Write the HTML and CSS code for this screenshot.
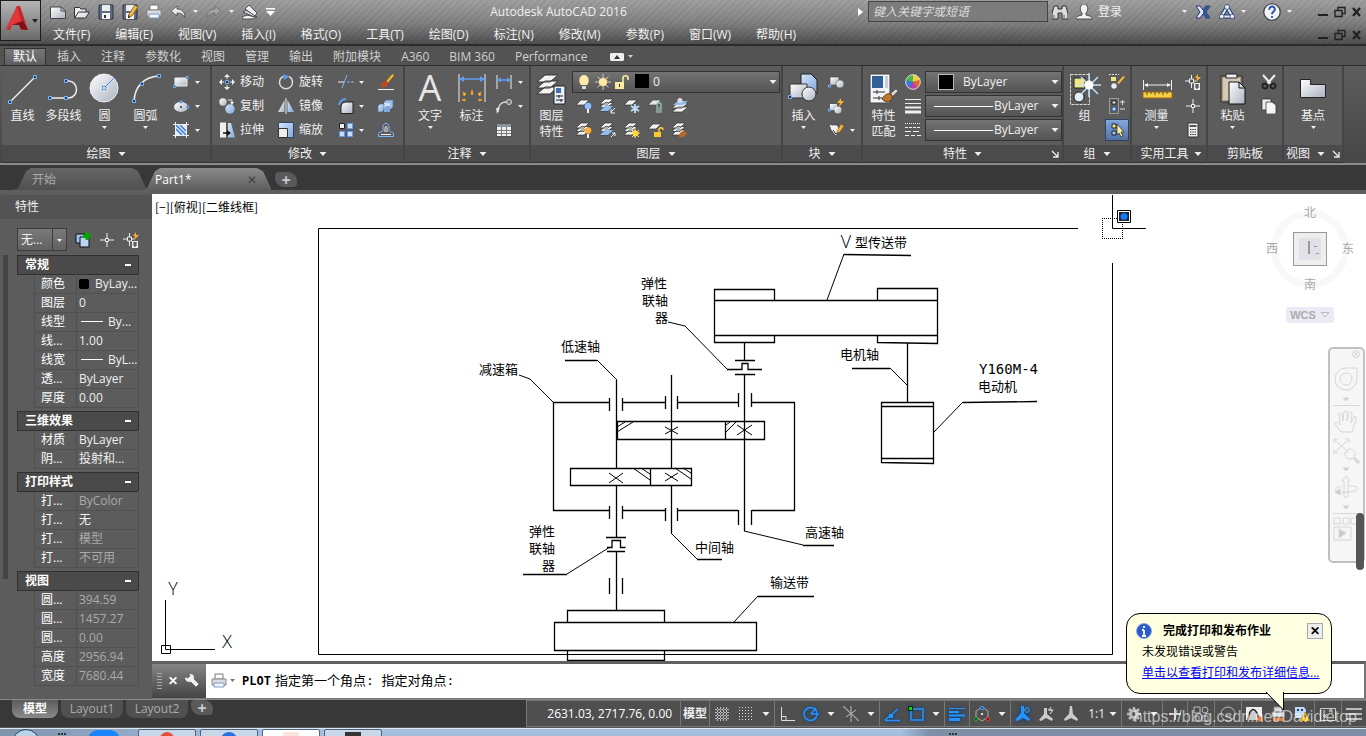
FILE: index.html
```html
<!DOCTYPE html>
<html lang="zh-CN">
<head>
    <meta charset="UTF-8">
    <meta name="viewport" content="width=device-width, initial-scale=1.0">
    <title>Autodesk AutoCAD 2016</title>
    <link rel="stylesheet" href="styles.css">
</head>
<body>
    <!-- Ícones -->
    <svg class="sprite" aria-hidden="true">
        <defs>
            <linearGradient id="g-steel" x1="0" y1="0" x2="1" y2="1"><stop offset="0" stop-color="#fff"/><stop offset="1" stop-color="#aab2c0"/></linearGradient>
            <linearGradient id="g-blue" x1="0" y1="0" x2="1" y2="1"><stop offset="0" stop-color="#d6e6fa"/><stop offset="1" stop-color="#7fa8dc"/></linearGradient>
        </defs>
        <symbol id="down" viewBox="0 0 7 4"><path d="M0 0h7L3.5 4z" fill="currentColor"/></symbol>

        <symbol id="new" viewBox="0 0 16 16"><path d="M.5 3h10.500l4.500 4v7.500H.5z" fill="url(#g-steel)" stroke="#444"/><path d="M11 3v4h4.500" fill="none" stroke="#444"/></symbol>
        <symbol id="open" viewBox="0 0 16 16"><path d="M.5 14V3.500h5L7 5h5v3" fill="#eee" stroke="#333"/><path d="M.5 14l4-6h11l-4 6z" fill="#dfe6ee" stroke="#333"/></symbol>
        <symbol id="save" viewBox="0 0 16 16"><path d="M1 1h14v14H1z" fill="#5e6b80" stroke="#2b3341"/><path d="M4 1h8v6H4z" fill="#e8ebf0"/><path d="M4 9h8v6H4z" fill="#f4f4f4"/><path d="M6 11h2v3H6z" fill="#333"/></symbol>
        <symbol id="saveas" viewBox="0 0 16 16"><use href="#save"/><path d="M7 10l6-9 3 2-6 9-3 1z" fill="#f5b83d" stroke="#6b4310" stroke-width=".7"/></symbol>
        <symbol id="print" viewBox="0 0 16 16"><path d="M4 1h8v5H4z" fill="#fff" stroke="#777"/><path d="M1 6h14v6H1z" fill="#d9dde3" stroke="#888"/><path d="M3 10h10v4H3z" fill="#eef5fc" stroke="#7d9cbf"/></symbol>
        <symbol id="undo" viewBox="0 0 16 16"><path d="M1 7l6-5v3c5 0 8 3 8 9-2-4-4-5-8-5v3z" fill="#e8e8e8" stroke="#4a4a4a" stroke-width=".8"/></symbol>
        <symbol id="redo" viewBox="0 0 16 16"><path d="M15 7L9 2v3c-5 0-8 3-8 9 2-4 4-5 8-5v3z" fill="#a5a5a5" stroke="#6d6d6d" stroke-width=".8"/></symbol>
        <symbol id="plane" viewBox="0 0 16 16"><path d="M0 13c4-2 7-2 9-1l6 1-5 2H1z" fill="#eee" stroke="#333" stroke-width=".8"/><path d="M1 8l3-2 9 5-1 2z" fill="#ccd4e0" stroke="#333" stroke-width=".8"/><path d="M3 5l4-4 8 8-2 3z" fill="#eee" stroke="#333" stroke-width=".8"/></symbol>
        <symbol id="qatmore" viewBox="0 0 9 9"><path d="M0 1h9v1.500H0zM0 4h9L4.500 9z" fill="#fff"/></symbol>
        <symbol id="binoc" viewBox="0 0 16 16"><path d="M2 2h4v3h4V2h4l2 8v5h-6V9H6v6H0v-5z" fill="#ddd" stroke="#333"/><path d="M2 11v3M12 11v3" stroke="#555"/></symbol>
        <symbol id="user" viewBox="0 0 16 16"><path d="M0 15c0-3 3-3 6-4V9C3 6 4 0 8 0s5 6 2 9v2c3 1 6 1 6 4z" fill="#f2f2f2" stroke="#333" stroke-width=".8"/></symbol>
        <symbol id="exch" viewBox="0 0 16 16"><path d="M1 2h4l3 4 3-4h4l-4 6 4 6h-4l-3-4-3 4H1l4-6z" fill="#dfe8f8" stroke="#22386f"/><path d="M8 6l3-4h4l-4 6 4 6h-4L8 10z" fill="#35549c"/></symbol>
        <symbol id="tri" viewBox="0 0 16 16"><path d="M8 3l5.500 9.500h-11z" fill="none" stroke="#223a6e" stroke-width="4"/><path d="M8 3l5.500 9.500h-11z" fill="none" stroke="#e6ecf8" stroke-width="2"/><g fill="#e6ecf8" stroke="#223a6e" stroke-width=".7"><circle cx="8" cy="3" r="2.500"/><circle cx="2.700" cy="12.500" r="2.300"/><circle cx="13.300" cy="12.500" r="2.300"/></g></symbol>
        <symbol id="help" viewBox="0 0 16 16"><circle cx="8" cy="8" r="7.300" fill="#f2f4f8" stroke="#333"/><path d="M5.500 6c0-4 5.500-3.500 5 0-.3 1.500-2.500 2-2.500 4M8 11.500v1.500" fill="none" stroke="#2a56a8" stroke-width="1.800"/></symbol>
        <symbol id="wmin" viewBox="0 0 12 12"><path d="M1 8h10v2H1z" fill="#222"/></symbol>
        <symbol id="wres" viewBox="0 0 12 12"><path d="M4 4V1.500h7v6H8M1 4.500h7v6H1z" fill="none" stroke="#222" stroke-width="1.400"/></symbol>
        <symbol id="wclose" viewBox="0 0 12 12"><path d="M2 2l7 8M9 2l-7 8" stroke="#222" stroke-width="2.400"/></symbol>

        <symbol id="line" viewBox="0 0 32 32"><path d="M4 28L28 4" stroke="#eee" stroke-width="1.500"/><path d="M1.500 27.500h3v3h-3zM26.500 2.500h3v3h-3z" fill="#2b3d5c" stroke="#7db2ff"/></symbol>
        <symbol id="pline" viewBox="0 0 32 32"><path d="M2 25h19c10-1 10-16 0-17h-3" fill="none" stroke="#eee" stroke-width="1.500"/><path d="M.5 23.500h3v3h-3zM16.500 23.500h3v3h-3zM16.500 6.500h3v3h-3z" fill="#2b3d5c" stroke="#7db2ff"/></symbol>
        <symbol id="circle" viewBox="0 0 32 32"><circle cx="15" cy="15" r="14" fill="url(#g-steel)" stroke="#eee"/><path d="M15 15L25 5" stroke="#4f8fee"/><path d="M13.500 13.500h3v3h-3z" fill="#fff" stroke="#4f8fee"/></symbol>
        <symbol id="arc" viewBox="0 0 32 32"><path d="M4 28C5 14 13 4 29 3" fill="none" stroke="#eee" stroke-width="1.500"/><path d="M2.500 26.500h3v3h-3zM10.500 9.500h3v3h-3zM27.500 1.500h3v3h-3z" fill="#2b3d5c" stroke="#7db2ff"/></symbol>
        <symbol id="rect" viewBox="0 0 16 16"><path d="M2 4h12v8H2z" fill="url(#g-steel)" stroke="#eee"/><path d="M.5 11.500h2v2h-2zM13 2.500h2v2h-2z" fill="#234" stroke="#7db2ff"/></symbol>
        <symbol id="ellipse" viewBox="0 0 16 16"><ellipse cx="8" cy="9" rx="7" ry="5" fill="url(#g-steel)"/><path d="M8 8v2M7 9h2" stroke="#333"/><path d="M7 3h2v2H7zM13.500 8h2v2h-2z" fill="#234" stroke="#7db2ff"/></symbol>
        <symbol id="hatch" viewBox="0 0 16 16"><path d="M3 3h10v10H3z" fill="#dfeafc"/><path d="M3 7l6 6M3 3l10 10M7 3l6 6" stroke="#3e7bdc" stroke-width="1.500"/><path d="M2.500 0v16M13.500 0v16M0 2.500h16M0 13.500h16" stroke="#eee"/></symbol>

        <symbol id="move" viewBox="0 0 16 16"><path d="M8 0l3 3H5zM8 16l3-3H5zM0 8l3-3v6zM16 8l-3-3v6z" fill="#eee"/><path d="M8 3v2M8 11v2M3 8h2M11 8h2" stroke="#eee"/><path d="M6.500 6.500h3v3h-3z" fill="#234" stroke="#7db2ff"/></symbol>
        <symbol id="rotate" viewBox="0 0 16 16"><path d="M11 2.500A6.500 6.500 0 1 1 5 2.500" fill="none" stroke="#ddd" stroke-width="1.500"/><path d="M5 0l6 2.500L6 6z" fill="#5f9cf5"/></symbol>
        <symbol id="trim" viewBox="0 0 16 16"><path d="M9 8h7" stroke="#7db2ff" stroke-dasharray="3 1"/><path d="M4 14L9 1" stroke="#7db2ff"/><path d="M0 8h6" stroke="#eee"/></symbol>
        <symbol id="erase" viewBox="0 0 16 16"><path d="M8 7l6-7h2v2l-6 7z" fill="#f0b63c" stroke="#7b4a12" stroke-width=".6"/><path d="M3 13c0-3 2-6 5-6l2 2c0 3-3 5-7 4z" fill="#c4471c"/><path d="M0 15.500h16" stroke="#eee"/></symbol>
        <symbol id="copy" viewBox="0 0 16 16"><circle cx="4" cy="4" r="3.700" fill="url(#g-steel)"/><circle cx="11" cy="11" r="4.700" fill="url(#g-blue)"/><path d="M9 2h4v3" fill="none" stroke="#eee"/><path d="M11 4h4l-2 3z" fill="#eee"/></symbol>
        <symbol id="mirror" viewBox="0 0 16 16"><path d="M6.500 2v12H0z" fill="url(#g-steel)"/><path d="M9.500 2v12H16z" fill="url(#g-blue)"/><path d="M8 0v16" stroke="#eee"/></symbol>
        <symbol id="fillet" viewBox="0 0 16 16"><path d="M3 15.500V9c0-3 2-5 5-5h7v11.500z" fill="url(#g-steel)" stroke="#222"/><path d="M1 7C2 3 4 1 8 1" fill="none" stroke="#5f9cf5" stroke-width="1.800"/></symbol>
        <symbol id="explode" viewBox="0 0 16 16"><path d="M6 4l2-2h7v7l-2 2H6z" fill="#9dbfe8" stroke="#4d6a90" stroke-width=".6"/><path d="M6 5h6v7H6z" fill="#cfe1f6"/><path d="M0 8l2-2h4v6l-2 2H0z" fill="url(#g-blue)" stroke="#4d6a90" stroke-width=".6"/><path d="M8 8h4v6H6v-3z" fill="#7fa8dc"/></symbol>
        <symbol id="stretch" viewBox="0 0 16 16"><path d="M1 .5h6v15H1z" fill="#eee"/><path d="M9 1h3l4 14.500H9z" fill="url(#g-blue)"/><path d="M4 11h6" stroke="#111" stroke-width="1.500"/><path d="M8 8l4 3-4 3z" fill="#111"/></symbol>
        <symbol id="scale" viewBox="0 0 16 16"><path d="M.5.5h15v15H.5z" fill="url(#g-blue)" stroke="#2c4468"/><path d="M.5 6.500h9v9h-9z" fill="#eee" stroke="#333"/></symbol>
        <symbol id="array" viewBox="0 0 16 16"><path d="M1.500 1.500h5v5h-5z" fill="#eee" stroke="#222"/><path d="M9.500 1.500h5v5h-5zM1.500 9.500h5v5h-5zM9.500 9.500h5v5h-5z" fill="#c7dcf8" stroke="#5f9cf5"/></symbol>
        <symbol id="offset" viewBox="0 0 16 16"><path d="M.5 14.500v-3c0-2 4-1 4.500-3V5c0-5 6-5 6 0v3.500c.5 2 4.500 1 4.500 3v3z" fill="none" stroke="#7db2ff"/><path d="M3 12.500h10M7 10V6c0-2 2-2 2 0v4" fill="none" stroke="#eee"/></symbol>

        <symbol id="dim" viewBox="0 0 32 32"><path d="M3 1v28M29 1v28" stroke="#eee"/><path d="M5 6h22" stroke="#5f9cf5" stroke-width="1.500"/><path d="M3 6l5-3v6zM29 6l-5-3v6z" fill="#5f9cf5"/><path d="M10 21l-3-2 1 4zM16 17l-1 4 1 1 1-1zM22 21l3-2-1 4zM9 26l-3 1 3 1zM23 26l3 1-3 1z" fill="#fc3" stroke="#f09a28"/></symbol>
        <symbol id="lindim" viewBox="0 0 16 16"><path d="M1 1v14M15 1v14" stroke="#eee"/><path d="M2 6h12" stroke="#5f9cf5" stroke-width="1.500"/><path d="M1 6l4-2.500v5zM15 6l-4-2.500v5z" fill="#5f9cf5"/></symbol>
        <symbol id="leader" viewBox="0 0 16 16"><path d="M2 14C2 8 5 4 10 4" fill="none" stroke="#ddd" stroke-width="1.500"/><path d="M0 10h4l-3 6z" fill="#ddd"/><circle cx="13" cy="4" r="2.500" fill="#777" stroke="#ddd"/></symbol>
        <symbol id="table" viewBox="0 0 16 16"><path d="M.5 1.500h15v13H.5z" fill="#f0f0f0" stroke="#555"/><path d="M1 2h14v3H1z" fill="#8a92a0"/><path d="M1 8.500h14M1 11.500h14M5.500 5v9M10.500 5v9" stroke="#777"/></symbol>

        <symbol id="sheets" viewBox="0 0 16 16"><path d="M5 1h8l-5 5H0zM5 4.500h8l-5 5H0zM5 8h8l-5 5H0z" fill="#f2f2f2" stroke="#333" stroke-width=".7"/></symbol>
        <symbol id="layerprop" viewBox="0 0 32 32"><path d="M9 2h13l-8 7H1zM9 8h13l-8 7H1zM9 14h13l-8 7H1z" fill="#f4f4f4" stroke="#333"/><path d="M18 13h11v18H18z" fill="#e8eef6" stroke="#222"/><path d="M20 15h5v5h-5z" fill="#3f6fae"/><path d="M20 23h7M20 27h7M23 22v3M25 26v3" stroke="#222"/></symbol>
        <symbol id="ly1" viewBox="0 0 16 16"><path d="M5 2h8l-5 5H0z" fill="#f2f2f2" stroke="#333" stroke-width=".7"/><circle cx="12" cy="8" r="3.300" fill="#8cc0ff"/><path d="M11 11h2v4h-2z" fill="#eee"/></symbol>
        <symbol id="ly2" viewBox="0 0 16 16"><use href="#sheets"/><path d="M5 8h8l-5 5H0z" fill="#8fbcf5"/><path d="M15 10l-4 4M11 11v4h4" stroke="#eee" fill="none"/></symbol>
        <symbol id="ly3" viewBox="0 0 16 16"><path d="M5 2h8l-5 5H0z" fill="#f2f2f2" stroke="#333" stroke-width=".7"/><path d="M11 6v9M7 8l8 5M15 8l-8 5" stroke="#bfe0ff" stroke-width="1.800"/></symbol>
        <symbol id="ly4" viewBox="0 0 16 16"><path d="M5 2h8l-5 5H0z" fill="#e2e6e6" stroke="#444" stroke-width=".7"/><path d="M9 9V7c0-3 4-3 4 0v2" fill="none" stroke="#9db8b4" stroke-width="1.500"/><path d="M8 9h6v6H8z" fill="#7f9a97"/></symbol>
        <symbol id="ly5" viewBox="0 0 16 16"><path d="M6 5h10l-6 5H0zM6 9h10l-6 5H0z" fill="#f2f2f2" stroke="#333" stroke-width=".7"/><path d="M6 3h10l-5 4H1z" fill="#8fbcf5"/><circle cx="8" cy="2.500" r="2.500" fill="#ddd"/></symbol>
        <symbol id="ly6" viewBox="0 0 16 16"><use href="#sheets"/><circle cx="12" cy="8.500" r="3.300" fill="#ffb03a"/><path d="M11 12h2v4h-2z" fill="#eee"/></symbol>
        <symbol id="ly7" viewBox="0 0 16 16"><use href="#sheets"/><path d="M5 8h8l-5 5H0z" fill="#8fbcf5"/><path d="M11 15l4-4M12 11h3v3" stroke="#eee" fill="none"/></symbol>
        <symbol id="ly8" viewBox="0 0 16 16"><use href="#sheets"/><path d="M11 6v10M6 11h10M8 8l7 7M15 8l-7 7" stroke="#ffe27a"/><circle cx="11.500" cy="11.500" r="3" fill="#ffd83a"/></symbol>
        <symbol id="ly9" viewBox="0 0 16 16"><path d="M5 2h8l-5 5H0z" fill="#f2f2f2" stroke="#333" stroke-width=".7"/><path d="M11 10V8c0-3 4-3 4 0" fill="none" stroke="#ffc82e" stroke-width="1.500"/><path d="M6 10h7v5H6z" fill="#ffc82e"/></symbol>
        <symbol id="ly10" viewBox="0 0 16 16"><use href="#sheets"/><path d="M7 13c1-3 3-4 5-4l3 2c-1 3-4 5-8 4z" fill="#b5692d"/></symbol>
        <symbol id="bulb" viewBox="0 0 16 16"><path d="M5 11C2 8 3 1 8 1s6 7 3 10z" fill="#ffe9a3"/><path d="M6 12h4v3H6z" fill="#ddd"/></symbol>
        <symbol id="sun" viewBox="0 0 16 16"><path d="M8 0v16M0 8h16M2.500 2.500l11 11M13.500 2.500l-11 11" stroke="#ccc"/><circle cx="8" cy="8" r="4.500" fill="#ffe9a3" stroke="#666" stroke-width=".5"/></symbol>
        <symbol id="lock" viewBox="0 0 16 16"><path d="M9 8V4c0-3 5-3 5 0v2" fill="none" stroke="#ffe9a3" stroke-width="1.600"/><path d="M1 8h9v7H1z" fill="#ffe9a3"/><path d="M5 10h1v3H5z" fill="#333"/></symbol>

        <symbol id="insert" viewBox="0 0 32 32"><path d="M13 1h10l6 6v13H13z" fill="url(#g-blue)" stroke="#222"/><path d="M2 11h17v14H2z" fill="url(#g-steel)" stroke="#333"/><circle cx="21" cy="21" r="7" fill="url(#g-steel)" stroke="#333"/><path d="M.5 22.500h3v3h-3z" fill="#234" stroke="#7db2ff"/></symbol>
        <symbol id="blk1" viewBox="0 0 16 16"><path d="M2 3h9v8H2z" fill="url(#g-steel)" stroke="#444" stroke-width=".6"/><circle cx="12" cy="10" r="4" fill="url(#g-steel)" stroke="#555" stroke-width=".6"/><path d="M.5 11h2v2h-2z" fill="#234" stroke="#7db2ff"/></symbol>
        <symbol id="blk2" viewBox="0 0 16 16"><path d="M2 6h7v6H2z" fill="url(#g-steel)"/><circle cx="10" cy="12" r="3.500" fill="url(#g-steel)"/><path d="M13 0l-4 5h3l-1 4 5-6h-3z" fill="#ffb02e"/><path d="M.5 11h2v2h-2z" fill="#234" stroke="#7db2ff"/></symbol>
        <symbol id="blk3" viewBox="0 0 16 16"><path d="M1 2l3 1h5l3 5-4 6-5-6z" fill="#f2f2f2" stroke="#333" stroke-width=".6"/><path d="M5 8l3 4 5-4" fill="none" stroke="#333"/><path d="M9 9l4-7 3 2-4 6-3 1z" fill="#f0b63c" stroke="#6b4310" stroke-width=".5"/></symbol>
        <symbol id="match" viewBox="0 0 32 32"><path d="M2 1h20v29H2z" fill="#f1f3f6" stroke="#444"/><path d="M4 3h11v12H4z" fill="#2f6196"/><path d="M17 3h3v12h-3z" fill="#c9ced6"/><path d="M5 19h12M5 25h9M9 17v4M11 23v4" stroke="#333"/><path d="M22 21l6-5 2 2-6 6z" fill="#ddd" stroke="#444" stroke-width=".6"/><path d="M14 26c3-5 6-6 9-5l2 3c-2 5-6 7-11 2z" fill="#b9752f" stroke="#5d3510"/></symbol>
        <symbol id="wheel" viewBox="0 0 16 16"><path d="M8 8V.5A7.500 7.500 0 0 1 15 6z" fill="#f4d23c"/><path d="M8 8l7-2a7.500 7.500 0 0 1-3 8z" fill="#e8632c"/><path d="M8 8l4 6a7.500 7.500 0 0 1-8 0z" fill="#b73fb4"/><path d="M8 8l-4 6A7.500 7.500 0 0 1 1 6z" fill="#3c78e0"/><path d="M8 8L1 6a7.500 7.500 0 0 1 7-5.500z" fill="#4cb848"/><circle cx="8" cy="8" r="7.300" fill="none" stroke="#ddd"/></symbol>
        <symbol id="lw" viewBox="0 0 16 16"><path d="M0 1.500h16M0 5.500h16" stroke="#eee"/><path d="M0 9.500h16" stroke="#eee" stroke-width="2"/><path d="M0 14h16" stroke="#eee" stroke-width="3"/></symbol>
        <symbol id="lt" viewBox="0 0 16 16"><path d="M0 1.500h16" stroke="#eee" stroke-dasharray="1 1"/><path d="M0 5.500h16" stroke="#eee" stroke-dasharray="3 1"/><path d="M0 9.500h16" stroke="#eee" stroke-dasharray="6 2"/><path d="M0 13.500h16" stroke="#eee" stroke-dasharray="4 2"/></symbol>
        <symbol id="group" viewBox="0 0 32 32"><path d="M1.500 1.500h19v30h-19z" fill="none" stroke="#ddd" stroke-dasharray="3 1"/><path d="M5 5h11v10H5z" fill="#f1e58a" stroke="#222"/><circle cx="10" cy="24" r="5" fill="#e4f0f8" stroke="#222"/><path d="M20 0v24M9 12h23M12 4l17 17M29 4L12 21" stroke="#bfe2ff" stroke-width="1.500"/><circle cx="20" cy="12" r="4.500" fill="#fff"/></symbol>
        <symbol id="grp1" viewBox="0 0 16 16"><path d="M0 .5h10" stroke="#ddd" stroke-dasharray="2 1"/><path d="M2 3h5v4H2z" fill="#f1e58a"/><circle cx="5" cy="12" r="2.700" fill="#e4f0f8"/><path d="M8 9l6-7 2 1-6 7z" fill="#f0b63c"/></symbol>
        <symbol id="grp2" viewBox="0 0 16 16"><path d="M.5.5h9v15h-9z" fill="none" stroke="#ddd" stroke-dasharray="1 1"/><path d="M3 3h4v3H3z" fill="#eee" stroke="#222"/><circle cx="5" cy="11" r="2" fill="#cfe0ff" stroke="#26c"/><path d="M11 4h5M13.500 2v5M11 11h5" stroke="#ddd"/></symbol>
        <symbol id="grp3" viewBox="0 0 16 16"><path d="M.5.500h9v15h-9z" fill="none" stroke="#3f8bff" stroke-dasharray="1 1"/><path d="M3 2h4v4H3z" fill="#f1e58a" stroke="#222"/><path d="M3 9h4v4H3z" fill="#9ec4f0" stroke="#222"/><path d="M8 2l7 8h-3l2 4-2 1-2-4-2 2z" fill="#f6eea0" stroke="#222" stroke-width=".7"/></symbol>
        <symbol id="measure" viewBox="0 0 32 32"><path d="M2.500 7v10M30.500 7v10M4 12h25" stroke="#eee"/><path d="M3 12l4-2v4zM30 12l-4-2v4z" fill="#eee"/><path d="M2 19h29v6H2z" fill="#f4d046" stroke="#a4660e"/><path d="M6 19v3M10 19v2M14 19v3M18 19v2M22 19v3M26 19v2" stroke="#6b4a0c"/></symbol>
        <symbol id="qsel" viewBox="0 0 16 16"><path d="M6.500 1v13M0 7h11" stroke="#eee"/><path d="M4.500 5h4v4h-4z" fill="#555" stroke="#eee"/><path d="M13 0l-3 4h2l-1 4 5-5h-3z" fill="#ffb02e"/><path d="M9 9h6v7H9z" fill="#eee"/><path d="M10 11h4M10 13h4M12 10v5" stroke="#333"/></symbol>
        <symbol id="pick" viewBox="0 0 16 16"><path d="M8 1v14M1 8h14" stroke="#eee"/><path d="M6.500 6.500h3v3h-3z" fill="#555" stroke="#eee"/></symbol>
        <symbol id="calc" viewBox="0 0 16 16"><path d="M3 1h10v14H3z" fill="#eee" stroke="#333"/><path d="M4.500 3h7v2h-7z" fill="#555"/><path d="M5 7.500h6M5 10h6M5 12.500h6" stroke="#333" stroke-dasharray="1.500 .8"/></symbol>
        <symbol id="paste" viewBox="0 0 32 32"><path d="M4 3h21v26H4z" fill="#a69683" stroke="#2e2a26"/><path d="M6 5h17v22H6z" fill="#d8c9b6"/><path d="M9 1h11v4H9z" fill="#eee" stroke="#222"/><path d="M12 9h10l6 6v16H12z" fill="url(#g-steel)" stroke="#111"/><path d="M22 9v6h6" fill="none" stroke="#111"/></symbol>
        <symbol id="cut" viewBox="0 0 16 16"><path d="M2 1l8 9M14 1l-8 9" stroke="#eee" stroke-width="2"/><circle cx="4" cy="12" r="2.500" fill="none" stroke="#222" stroke-width="1.800"/><circle cx="12" cy="12" r="2.500" fill="none" stroke="#222" stroke-width="1.800"/></symbol>
        <symbol id="copyclip" viewBox="0 0 16 16"><path d="M1 1h9v11H1z" fill="#eee" stroke="#222" stroke-width=".7"/><path d="M5 4h6l4 3v9H5z" fill="#f6f6f6" stroke="#222" stroke-width=".7"/></symbol>
        <symbol id="base" viewBox="0 0 32 32"><path d="M3.500 6.500h10v5h15v13h-25z" fill="url(#g-steel)" stroke="#222"/></symbol>
        <symbol id="launch" viewBox="0 0 8 8"><path d="M1 1l5 5M7 2v5H2" fill="none" stroke="#eee" stroke-width="1.300"/></symbol>
        <symbol id="pickadd" viewBox="0 0 16 16"><path d="M1 2h9v9H1z" fill="#9fc3ee" stroke="#111"/><path d="M5 5h9v10H5z" fill="#b9d4f4" stroke="#111"/><path d="M12 0v8M8 4h8" stroke="#0a0" stroke-width="3"/></symbol>

        <symbol id="grid" viewBox="0 0 16 16"><path d="M3.500 1v14M6.500 1v14M9.500 1v14M12.500 1v14M1 3.500h14M1 6.500h14M1 9.500h14M1 12.500h14" stroke="#ddd" stroke-dasharray="2 1" stroke-width=".8"/></symbol>
        <symbol id="snap" viewBox="0 0 16 16"><path d="M1 1.500h14M1 4.500h14M1 7.500h14M1 10.500h14M1 13.500h14" stroke="#ddd" stroke-dasharray="1 2"/></symbol>
        <symbol id="ortho" viewBox="0 0 16 16"><path d="M2.500 1v13.500H16M3 10.500h4v4" fill="none" stroke="#ddd"/></symbol>
        <symbol id="polar" viewBox="0 0 16 16"><circle cx="7.500" cy="8" r="6.500" fill="none" stroke="#2492ff" stroke-width="1.500"/><path d="M8 8h8M8 8l5-6" stroke="#2492ff" stroke-width="1.500"/></symbol>
        <symbol id="iso" viewBox="0 0 16 16"><path d="M0 0l16 15" stroke="#999" stroke-width="1.500"/><path d="M8 0v16M3 11L13 4" stroke="#bbb"/></symbol>
        <symbol id="track" viewBox="0 0 16 16"><path d="M1 14.500h15M1 14L14 3" stroke="#2492ff" stroke-width="1.500"/><path d="M5 8h4v4H5z" fill="#2492ff"/></symbol>
        <symbol id="osnap" viewBox="0 0 16 16"><path d="M3 3h12v11H3z" fill="none" stroke="#2492ff" stroke-width="1.500"/><path d="M.5.5h4v4h-4z" fill="#0d0" stroke="#020"/></symbol>
        <symbol id="thick" viewBox="0 0 16 16"><path d="M0 2.500h16" stroke="#2492ff"/><path d="M0 6h10M0 9.500h16" stroke="#2492ff" stroke-width="2"/><path d="M0 13.500h11" stroke="#2492ff" stroke-width="3"/></symbol>
        <symbol id="gizmo" viewBox="0 0 16 16"><path d="M8 1l6 4v6l-6 4-6-4V5z" fill="none" stroke="#aaa"/><circle cx="8" cy="2" r="1.800" fill="#457" stroke="#49f"/><circle cx="2" cy="13" r="1.800" fill="#252" stroke="#2a2"/><circle cx="14" cy="13" r="1.800" fill="#622" stroke="#e33"/><path d="M8 7v2" stroke="#ddd" stroke-width="2"/></symbol>
        <symbol id="ann1" viewBox="0 0 16 16"><path d="M6 0h3v7l6 6-1 2-6-3-6 3-2-1 6-7z" fill="#2492ff"/><circle cx="12" cy="4" r="2.500" fill="#555" stroke="#2492ff"/></symbol>
        <symbol id="ann2" viewBox="0 0 16 16"><path d="M5 2h3v6l6 5-1 2-6-3-5 3-2-1 5-6z" fill="#ccc"/><path d="M9 4h4M12 1l-2 3h4l-3 4" stroke="#ddd" fill="none"/></symbol>
        <symbol id="ann3" viewBox="0 0 16 16"><path d="M7 0h2l1 8 5 5-1 2-6-3-6 3-1-2 5-5z" fill="#ccc"/></symbol>
        <symbol id="gear" viewBox="0 0 16 16"><circle cx="8" cy="8" r="3.500" fill="none" stroke="#bbb" stroke-width="3"/><path d="M8 1v3M8 12v3M1 8h3M12 8h3M3 3l2 2M11 11l2 2M13 3l-2 2M3 13l2-2" stroke="#bbb" stroke-width="2.500"/></symbol>
        <symbol id="plus" viewBox="0 0 16 16"><path d="M8 2v12M2 8h12" stroke="#ccc" stroke-width="2"/></symbol>
        <symbol id="quick" viewBox="0 0 16 16"><path d="M1 1h6v6H1zM1 10h5v5H1z" fill="none" stroke="#bbb"/><circle cx="12" cy="4" r="3" fill="none" stroke="#bbb"/><path d="M9 10h6v5H9z" fill="none" stroke="#bbb"/></symbol>
        <symbol id="iso2" viewBox="0 0 16 16"><circle cx="8" cy="8" r="7" fill="none" stroke="#bbb"/><path d="M5 10h6" stroke="#bbb"/></symbol>
        <symbol id="hw" viewBox="0 0 16 16"><path d="M0 1h16v13H0z" fill="#eee"/><path d="M2 14C4 0 10 0 13 14" fill="#ccc" stroke="#222" stroke-width="1.500"/><circle cx="14" cy="13" r="2.500" fill="#f0792c"/></symbol>
        <symbol id="trayprint" viewBox="0 0 16 16"><path d="M4 1h8v5H4zM2 6h12v5H2z" fill="#ddd" stroke="#888"/><path d="M3 12h10v3H3z" fill="#f0792c"/></symbol>
        <symbol id="warn" viewBox="0 0 16 16"><path d="M1 1h9l2 3v8H1z" fill="#bcd8f2"/><path d="M3 3h2v2H3zM7 3h2v2H7z" fill="#246"/><path d="M11 6l5 9H6z" fill="#ffc91f" stroke="#a56c00" stroke-width=".6"/><path d="M11 9v3M11 13v1" stroke="#222"/></symbol>
        <symbol id="clean" viewBox="0 0 16 16"><path d="M.5 2.500h15v12H.5z" fill="none" stroke="#ccc"/><path d="M4 11l3-3M9 6l3-2M12 7V4H9M4 8v3h3" stroke="#ddd" fill="none"/></symbol>
        <symbol id="burger" viewBox="0 0 16 16"><path d="M0 3h16M0 8h16M0 13h16" stroke="#bbb" stroke-width="2"/></symbol>
        <symbol id="wrench" viewBox="0 0 16 16"><path d="M1 4l3 1 2-2-1-2c4-1 6 2 5 5l5 5-3 3-5-5C3 10 0 7 1 4z" fill="#f2f2f2" stroke="#555" stroke-width=".5"/></symbol>
    </svg>

    <div class="app">
        <!-- Barra de título -->
        <header class="titlebar">
            <button class="logo" aria-label="菜单浏览器">
                <svg width="36" height="36" viewBox="0 0 36 36"><path d="M14 3h3l8 24h-7l-2-5H9l-2 5-4-1z" fill="#c3262b"/><path d="M14 3L3 27l6-5 9-4z" fill="#e2373b"/><path d="M9 22l11-4 5 9-7-1-2-4z" fill="#7d1115"/><path d="M29 16h6l-3 4z" fill="#222"/></svg>
            </button>
            <div class="title-rows">
                <div class="title-row">
                    <div class="qat">
                        <button aria-label="新建"><svg class="i16"><use href="#new"/></svg></button>
                        <button aria-label="打开"><svg class="i16"><use href="#open"/></svg></button>
                        <button aria-label="保存"><svg class="i16"><use href="#save"/></svg></button>
                        <button aria-label="另存为"><svg class="i16"><use href="#saveas"/></svg></button>
                        <button aria-label="打印"><svg class="i16"><use href="#print"/></svg></button>
                        <button aria-label="放弃"><svg class="i16"><use href="#undo"/></svg><svg class="arr"><use href="#down"/></svg></button>
                        <button aria-label="重做"><svg class="i16"><use href="#redo"/></svg><svg class="arr"><use href="#down"/></svg></button>
                        <button aria-label="工作空间"><svg class="i16"><use href="#plane"/></svg></button>
                        <button aria-label="自定义"><svg class="i9"><use href="#qatmore"/></svg></button>
                    </div>
                    <h1>Autodesk AutoCAD 2016</h1>
                    <span class="play"></span>
                    <input class="search" type="text" placeholder="键入关键字或短语" aria-label="搜索">
                    <div class="infocenter">
                        <button aria-label="查找"><svg class="i16"><use href="#binoc"/></svg></button>
                        <button class="login"><svg class="i16"><use href="#user"/></svg>登录</button>
                        <button class="far" aria-label="登录选项"><svg class="arr"><use href="#down"/></svg></button>
                        <button aria-label="Exchange"><svg class="i16"><use href="#exch"/></svg></button>
                        <button aria-label="A360"><svg class="i16"><use href="#tri"/></svg><svg class="arr"><use href="#down"/></svg></button>
                        <button class="help" aria-label="帮助"><svg class="i18"><use href="#help"/></svg><svg class="arr"><use href="#down"/></svg></button>
                    </div>
                    <div class="winbtns">
                        <button aria-label="最小化"><svg class="i12"><use href="#wmin"/></svg></button>
                        <button aria-label="还原"><svg class="i12"><use href="#wres"/></svg></button>
                        <button aria-label="关闭"><svg class="i12"><use href="#wclose"/></svg></button>
                    </div>
                </div>
                <div class="title-row">
                    <nav class="menu">
                        <a href="#">文件(F)</a><a href="#">编辑(E)</a><a href="#">视图(V)</a><a href="#">插入(I)</a><a href="#">格式(O)</a><a href="#">工具(T)</a><a href="#">绘图(D)</a><a href="#">标注(N)</a><a href="#">修改(M)</a><a href="#">参数(P)</a><a href="#">窗口(W)</a><a href="#">帮助(H)</a>
                    </nav>
                    <div class="winbtns">
                        <button aria-label="最小化图形"><svg class="i12"><use href="#wmin"/></svg></button>
                        <button aria-label="还原图形"><svg class="i12"><use href="#wres"/></svg></button>
                        <button aria-label="关闭图形"><svg class="i12"><use href="#wclose"/></svg></button>
                    </div>
                </div>
            </div>
        </header>

        <!-- Abas da faixa -->
        <nav class="ribbon-tabs">
            <a href="#" class="active">默认</a><a href="#">插入</a><a href="#">注释</a><a href="#">参数化</a><a href="#">视图</a><a href="#">管理</a><a href="#">输出</a><a href="#">附加模块</a><a href="#">A360</a><a href="#">BIM 360</a><a href="#">Performance</a>
            <button class="minimize" aria-label="最小化功能区"><svg width="14" height="8" viewBox="0 0 14 8"><path d="M1 0h12l1 1v6l-1 1H1L0 7V1z" fill="#eee"/><path d="M4 6h6L7 2z" fill="#333"/></svg><svg class="arr"><use href="#down"/></svg></button>
        </nav>

        <!-- Faixa de opções -->
        <div class="ribbon">
            <section class="panel w-draw">
                <div class="tools">
                    <button class="big"><svg class="i32"><use href="#line"/></svg>直线</button>
                    <button class="big"><svg class="i32"><use href="#pline"/></svg>多段线</button>
                    <button class="big"><svg class="i32"><use href="#circle"/></svg>圆<svg class="arr"><use href="#down"/></svg></button>
                    <button class="big"><svg class="i32"><use href="#arc"/></svg>圆弧<svg class="arr"><use href="#down"/></svg></button>
                    <div class="smalls gap">
                        <button aria-label="矩形"><svg class="i16"><use href="#rect"/></svg><svg class="arr"><use href="#down"/></svg></button>
                        <button aria-label="椭圆"><svg class="i16"><use href="#ellipse"/></svg><svg class="arr"><use href="#down"/></svg></button>
                        <button aria-label="图案填充"><svg class="i16"><use href="#hatch"/></svg><svg class="arr"><use href="#down"/></svg></button>
                    </div>
                </div>
                <h2>绘图<svg class="arr big-arr"><use href="#down"/></svg></h2>
            </section>
            <section class="panel w-modify">
                <div class="tools">
                    <div class="smalls modify">
                        <button><svg class="i16"><use href="#move"/></svg>移动</button>
                        <button><svg class="i16"><use href="#copy"/></svg>复制</button>
                        <button><svg class="i16"><use href="#stretch"/></svg>拉伸</button>
                        <button><svg class="i16"><use href="#rotate"/></svg>旋转</button>
                        <button><svg class="i16"><use href="#mirror"/></svg>镜像</button>
                        <button><svg class="i16"><use href="#scale"/></svg>缩放</button>
                        <button aria-label="修剪"><svg class="i16"><use href="#trim"/></svg><svg class="arr"><use href="#down"/></svg></button>
                        <button aria-label="圆角"><svg class="i16"><use href="#fillet"/></svg><svg class="arr"><use href="#down"/></svg></button>
                        <button aria-label="阵列"><svg class="i16"><use href="#array"/></svg><svg class="arr"><use href="#down"/></svg></button>
                        <button aria-label="删除"><svg class="i16"><use href="#erase"/></svg></button>
                        <button aria-label="分解"><svg class="i16"><use href="#explode"/></svg></button>
                        <button aria-label="偏移"><svg class="i16"><use href="#offset"/></svg></button>
                    </div>
                </div>
                <h2>修改<svg class="arr big-arr"><use href="#down"/></svg></h2>
            </section>
            <section class="panel w-note">
                <div class="tools">
                    <button class="big wide"><span class="letter">A</span>文字<svg class="arr"><use href="#down"/></svg></button>
                    <button class="big"><svg class="i32"><use href="#dim"/></svg>标注</button>
                    <div class="smalls">
                        <button aria-label="线性"><svg class="i16"><use href="#lindim"/></svg><svg class="arr"><use href="#down"/></svg></button>
                        <button aria-label="引线"><svg class="i16"><use href="#leader"/></svg><svg class="arr"><use href="#down"/></svg></button>
                        <button aria-label="表格"><svg class="i16"><use href="#table"/></svg></button>
                    </div>
                </div>
                <h2>注释<svg class="arr big-arr"><use href="#down"/></svg></h2>
            </section>
            <section class="panel w-layer">
                <div class="tools">
                    <button class="big two"><svg class="i32"><use href="#layerprop"/></svg>图层<br>特性</button>
                    <div class="layer-tools">
                        <div class="layer-select">
                            <select aria-label="图层"><option>0</option></select>
                            <span class="marks"><svg class="i16"><use href="#bulb"/></svg><svg class="i16"><use href="#sun"/></svg><svg class="i16"><use href="#lock"/></svg><i class="swatch"></i></span>
                            <svg class="arr big-arr"><use href="#down"/></svg>
                        </div>
                        <div class="icon-grid">
                            <button aria-label="关"><svg class="i16"><use href="#ly1"/></svg></button>
                            <button aria-label="隔离"><svg class="i16"><use href="#ly2"/></svg></button>
                            <button aria-label="冻结"><svg class="i16"><use href="#ly3"/></svg></button>
                            <button aria-label="锁定"><svg class="i16"><use href="#ly4"/></svg></button>
                            <button aria-label="置为当前"><svg class="i16"><use href="#ly5"/></svg></button>
                            <button aria-label="打开所有图层"><svg class="i16"><use href="#ly6"/></svg></button>
                            <button aria-label="取消隔离"><svg class="i16"><use href="#ly7"/></svg></button>
                            <button aria-label="解冻"><svg class="i16"><use href="#ly8"/></svg></button>
                            <button aria-label="解锁"><svg class="i16"><use href="#ly9"/></svg></button>
                            <button aria-label="匹配图层"><svg class="i16"><use href="#ly10"/></svg></button>
                        </div>
                    </div>
                </div>
                <h2>图层<svg class="arr big-arr"><use href="#down"/></svg></h2>
            </section>
            <section class="panel w-block">
                <div class="tools">
                    <button class="big"><svg class="i32"><use href="#insert"/></svg>插入<svg class="arr"><use href="#down"/></svg></button>
                    <div class="smalls">
                        <button aria-label="创建"><svg class="i16"><use href="#blk1"/></svg></button>
                        <button aria-label="编辑块"><svg class="i16"><use href="#blk2"/></svg></button>
                        <button aria-label="编辑属性"><svg class="i16"><use href="#blk3"/></svg><svg class="arr"><use href="#down"/></svg></button>
                    </div>
                </div>
                <h2>块<svg class="arr big-arr"><use href="#down"/></svg></h2>
            </section>
            <section class="panel w-prop">
                <div class="tools">
                    <button class="big two"><svg class="i32"><use href="#match"/></svg>特性<br>匹配</button>
                    <div class="smalls tight">
                        <button aria-label="颜色"><svg class="i16"><use href="#wheel"/></svg></button>
                        <button aria-label="线宽"><svg class="i16"><use href="#lw"/></svg></button>
                        <button aria-label="线型"><svg class="i16"><use href="#lt"/></svg></button>
                    </div>
                    <div class="prop-selects">
                        <label class="psel color"><i class="swatch"></i><select aria-label="对象颜色"><option>ByLayer</option></select><svg class="arr big-arr"><use href="#down"/></svg></label>
                        <label class="psel"><i class="rule"></i><select aria-label="线宽"><option>ByLayer</option></select><svg class="arr big-arr"><use href="#down"/></svg></label>
                        <label class="psel"><i class="rule"></i><select aria-label="线型"><option>ByLayer</option></select><svg class="arr big-arr"><use href="#down"/></svg></label>
                    </div>
                </div>
                <h2>特性<svg class="arr big-arr"><use href="#down"/></svg><svg class="launch"><use href="#launch"/></svg></h2>
            </section>
            <section class="panel w-group">
                <div class="tools">
                    <button class="big"><svg class="i32"><use href="#group"/></svg>组</button>
                    <div class="smalls">
                        <button aria-label="解除编组"><svg class="i16"><use href="#grp1"/></svg></button>
                        <button aria-label="组编辑"><svg class="i16"><use href="#grp2"/></svg></button>
                        <button class="on" aria-label="启用组选择"><svg class="i16"><use href="#grp3"/></svg></button>
                    </div>
                </div>
                <h2>组<svg class="arr big-arr"><use href="#down"/></svg></h2>
            </section>
            <section class="panel w-util">
                <div class="tools">
                    <button class="big wider"><svg class="i32"><use href="#measure"/></svg>测量<svg class="arr"><use href="#down"/></svg></button>
                    <div class="smalls">
                        <button aria-label="快速选择"><svg class="i16"><use href="#qsel"/></svg></button>
                        <button aria-label="点坐标"><svg class="i16"><use href="#pick"/></svg></button>
                        <button aria-label="计算器"><svg class="i16"><use href="#calc"/></svg></button>
                    </div>
                </div>
                <h2 class="close">实用工具<svg class="arr big-arr"><use href="#down"/></svg></h2>
            </section>
            <section class="panel w-util">
                <div class="tools">
                    <button class="big wider"><svg class="i32"><use href="#paste"/></svg>粘贴<svg class="arr"><use href="#down"/></svg></button>
                    <div class="smalls">
                        <button aria-label="剪切"><svg class="i16"><use href="#cut"/></svg></button>
                        <button aria-label="复制剪裁"><svg class="i16"><use href="#copyclip"/></svg></button>
                    </div>
                </div>
                <h2>剪贴板</h2>
            </section>
            <section class="panel w-view">
                <div class="tools">
                    <button class="big full"><svg class="i32"><use href="#base"/></svg>基点<svg class="arr"><use href="#down"/></svg></button>
                </div>
                <h2>视图<svg class="arr big-arr"><use href="#down"/></svg><svg class="launch"><use href="#launch"/></svg></h2>
            </section>
        </div>

        <!-- Abas de arquivo -->
        <div class="file-tabs">
            <a href="#" class="file-tab">开始</a>
            <a href="#" class="file-tab active">Part1*<span class="x">✕</span></a>
            <button class="add" aria-label="新图形">+</button>
        </div>

        <main class="work">
            <!-- Paleta de propriedades -->
            <aside class="palette">
                <h2>特性</h2>
                <div class="palette-top">
                    <div class="obj-select"><select aria-label="选择对象"><option>无...</option></select><svg class="arr"><use href="#down"/></svg></div>
                    <button aria-label="PICKADD"><svg class="i16"><use href="#pickadd"/></svg></button>
                    <button aria-label="选择"><svg class="i16"><use href="#pick"/></svg></button>
                    <button aria-label="快速选择"><svg class="i16"><use href="#qsel"/></svg></button>
                </div>
                <div class="props">
                    <h3>常规<i></i></h3>
                    <table>
                        <tr><th>颜色</th><td><i class="sq"></i>ByLay...</td></tr>
                        <tr><th>图层</th><td>0</td></tr>
                        <tr><th>线型</th><td><i class="dash"></i>By...</td></tr>
                        <tr><th>线...</th><td>1.00</td></tr>
                        <tr><th>线宽</th><td><i class="dash"></i>ByL...</td></tr>
                        <tr><th>透...</th><td>ByLayer</td></tr>
                        <tr><th>厚度</th><td>0.00</td></tr>
                    </table>
                    <h3>三维效果<i></i></h3>
                    <table>
                        <tr><th>材质</th><td>ByLayer</td></tr>
                        <tr><th>阴...</th><td>投射和...</td></tr>
                    </table>
                    <h3>打印样式<i></i></h3>
                    <table>
                        <tr><th>打...</th><td class="off">ByColor</td></tr>
                        <tr><th>打...</th><td>无</td></tr>
                        <tr><th>打...</th><td class="off">模型</td></tr>
                        <tr><th>打...</th><td class="off">不可用</td></tr>
                    </table>
                    <h3>视图<i></i></h3>
                    <table>
                        <tr><th>圆...</th><td class="off">394.59</td></tr>
                        <tr><th>圆...</th><td class="off">1457.27</td></tr>
                        <tr><th>圆...</th><td class="off">0.00</td></tr>
                        <tr><th>高度</th><td class="off">2956.94</td></tr>
                        <tr><th>宽度</th><td class="off">7680.44</td></tr>
                    </table>
                </div>
            </aside>

            <div class="stage">
                <!-- Área de desenho -->
                <div class="canvas">
                    <svg class="drawing">
                        <g transform="translate(-152 -194)">
                            <text class="vp" x="155" y="212">[−][俯视][二维线框]</text>
                            <!-- moldura e cursor -->
                            <path class="thin" d="M1078 228.500H318.500V654.500H1112.500V263M1112.500 195V228.500H1146"/>
                            <path class="thin dot" d="M1102 218.500h21M1102 238.500h21M1102.500 218v21M1122.500 218v21"/>
                            <path d="M1117.500 210.500h13v12h-13z" fill="#fff" stroke="#000"/>
                            <path d="M1119 212h10v9h-10z" fill="#222"/><circle cx="1124" cy="216.500" r="3.500" fill="#1478ff"/>
                            <!-- eixos UCS -->
                            <path class="thin" d="M165.500 600v49.500H215M161.500 645.500h9v8h-9z"/>
                            <text class="ucs" x="173" y="595">Y</text><text class="ucs" x="227" y="648">X</text>
                            <!-- correia em V -->
                            <path class="bold" d="M714 289.500h60.500v11M714.500 289v53.500h60V336M714 300.500h223.500M714 335.500h223.500M877.500 300V288.500h60V343.500L877.500 342.500V336"/>
                            <path class="bold" d="M744.500 342v18M735 360.500h20M735 374.500h20M727 369.500h15V363.500h6v6h14M744.500 374V531"/>
                            <path class="bold" d="M907.500 343V402M881.500 402.500h52v61l-52-1zM881 406.500h52M881 458.500h52"/>
                            <!-- caixa redutora -->
                            <path class="bold" d="M609 402.500H553.500V510.500H609M623 402.500h42M678 402.500h60M752 402.500h42.500V510.500H752M623 510.500h42M678 510.500h60"/>
                            <path class="bold" d="M609.500 398v13M622.500 398v13M665.500 396v13M677.500 396v13M738.500 393v14M751.500 393v14M609.500 506v13M622.500 506v13M665.500 508v13M677.500 508v13M738.500 510v15M751.500 510v15M609.500 578v16M622.500 578v16"/>
                            <path class="bold" d="M616.500 380v88M616.500 486v51M616.500 551v59M671.500 375v93M671.500 486v47"/>
                            <path class="bold" d="M617.500 421.500h147v18h-147zM725.500 421v18M570.500 468.500h121v17h-121zM650.500 468v17"/>
                            <path class="slim" d="M617 427l8-5M617 432l16-10M725 426l6-5M725 433l12-12M633 468l17 12M641 468l9 6M675 468l16 11M683 468l8 5"/>
                            <path class="slim" d="M665 427l13 7M678 427l-13 7M737 425l15 10M752 425l-15 10M609 473l14 10M623 473l-14 10M665 473l13 8M678 473l-13 8"/>
                            <!-- acoplamento e correia transportadora -->
                            <path class="bold" d="M606 537.500h20M607 551.500h18M607 547.500h5v-7h8.500v7h5"/>
                            <path class="bold" d="M567.500 622v-11.500h97V622M554.500 622.500h202v28h-202zM567.500 650v10.500h97V650"/>
                            <!-- chamadas -->
                            <path class="bold" d="M565 360.500h32M852 368.500h38M844 254.500l67 1M963 402.500l74-1M523 574.500h44M697 559.500h25M803 545.500h31M758 596.500h56"/>
                            <path class="slim" d="M597 360l20 20M519 375l11 4 23 23M890 368l18 18M844 254l-17 46M963 402l-30 31M567 574l43-27M671 533l26 26M744 531l59 14M758 596l-24 26M668 322l17 4 42 43"/>
                            <text class="ucs" x="846" y="248">V</text><text x="855" y="247">型传送带</text>
                            <text x="641" y="288">弹性</text><text x="642" y="305">联轴</text><text x="655" y="322">器</text>
                            <text x="561" y="351">低速轴</text><text x="479" y="374">减速箱</text><text x="840" y="359">电机轴</text>
                            <text class="mono" x="979" y="374">Y160M-4</text><text x="978" y="391">电动机</text>
                            <text x="529" y="536">弹性</text><text x="529" y="553">联轴</text><text x="542" y="570">器</text>
                            <text x="695" y="552">中间轴</text><text x="805" y="537">高速轴</text><text x="770" y="587">输送带</text>
                        </g>
                    </svg>
                    <div class="viewcube">
                        <span class="n">北</span><span class="w">西</span><button class="face" aria-label="上"><i></i></button><span class="e">东</span><span class="s">南</span>
                        <button class="wcs">WCS <svg width="10" height="6" viewBox="0 0 10 6"><path d="M1 .5h8L5 5z" fill="none" stroke="#bbb"/></svg></button>
                    </div>
                    <div class="navbar">
                        <svg width="33" height="212" viewBox="0 0 33 212" fill="none" stroke="#d4d8d8">
                            <circle cx="26" cy="5" r="3.500"/><path d="M24 3l4 4M28 3l-4 4"/>
                            <path d="M16 19h11v11a11 11 0 1 1-11-11z"/><circle cx="16" cy="30" r="6"/>
                            <path d="M13 49h6l-3 3z" fill="#ccc"/><path d="M3 56.500h27"/>
                            <path d="M11 83c-3-4-5-6-6-9 1-2 3 0 5 2l-1-11c1-2 3-1 3 1l1 6 1-9c1-2 3-1 3 0v9l2-8c1-2 3-1 3 1l-1 9 3-6c2-1 3 0 2 2l-4 13z"/>
                            <path d="M4 90l15 14M19 90L4 104M4 94v-4h4M15 90h4v4M4 100v4h4"/><circle cx="20" cy="105" r="5"/><path d="M24 109l5 5" stroke-width="3"/>
                            <path d="M13 119h6l-3 3z" fill="#ccc"/>
                            <path d="M16 127l4 5h-2v16h-4v-16h-2zM12 137c-12 3-7 8 8 6 12-2 9-6-1-6"/><path d="M5 143l5-3v6z" fill="#ccc"/>
                            <path d="M13 157h6l-3 3z" fill="#ccc"/><path d="M3 164.500h27"/>
                            <path d="M4 169h6v6H4zM13 169h6v6h-6zM21 169h6v6h-6zM4 178h17v13H4z"/><path d="M9 180l7 4-7 5z" fill="#ccc"/>
                        </svg>
                    </div>
                    <div class="thumb"></div>
                </div>
                <!-- Linha de comando -->
                <div class="command">
                    <div class="cmd-left"><i class="grip"></i><button aria-label="关闭">✕</button><button aria-label="自定义"><svg class="i16"><use href="#wrench"/></svg></button></div>
                    <label for="cmd"><svg class="i16"><use href="#print"/></svg><svg class="arr"><use href="#down"/></svg><b>PLOT</b><span>指定第一个角点: 指定对角点:</span></label>
                    <input id="cmd" type="text">
                </div>
            </div>
        </main>

        <!-- Barra de status -->
        <footer class="status">
            <div class="layouts">
                <a href="#" class="active">模型</a><a href="#">Layout1</a><a href="#">Layout2</a><button aria-label="新布局">+</button>
            </div>
            <div class="cells">
                <div class="cell coords">2631.03, 2717.76, 0.00</div>
                <button class="cell model">模型</button>
                <div class="cell"><svg><use href="#grid"/></svg><svg><use href="#snap"/></svg><svg class="arr"><use href="#down"/></svg></div>
                <div class="cell"><svg><use href="#ortho"/></svg><svg class="lit"><use href="#polar"/></svg><svg class="arr"><use href="#down"/></svg><svg><use href="#iso"/></svg><svg class="arr"><use href="#down"/></svg></div>
                <div class="cell"><svg class="lit"><use href="#track"/></svg><svg class="lit"><use href="#osnap"/></svg><svg class="arr"><use href="#down"/></svg></div>
                <div class="cell"><svg class="lit"><use href="#thick"/></svg></div>
                <div class="cell"><svg><use href="#gizmo"/></svg><svg class="arr"><use href="#down"/></svg></div>
                <div class="cell"><svg class="lit"><use href="#ann1"/></svg><svg><use href="#ann2"/></svg><svg><use href="#ann3"/></svg><span class="ratio">1:1</span><svg class="arr"><use href="#down"/></svg></div>
                <div class="cell"><svg><use href="#gear"/></svg><svg class="arr"><use href="#down"/></svg></div>
                <div class="cell"><svg><use href="#plus"/></svg></div>
                <div class="cell pad"><svg><use href="#quick"/></svg></div>
                <div class="cell pad"><svg><use href="#iso2"/></svg></div>
                <div class="cell"><svg><use href="#hw"/></svg><svg><use href="#trayprint"/></svg><svg><use href="#warn"/></svg></div>
                <div class="cell pad"><svg><use href="#clean"/></svg></div>
                <div class="cell last"><svg><use href="#burger"/></svg></div>
            </div>
        </footer>

        <!-- Barra de tarefas -->
        <div class="taskbar">
            <i class="start"></i><i class="dots"></i><i class="pin"></i>
            <span class="task"><i class="red"></i></span><span class="task"><i class="blue"></i></span><span class="task white"><i class="pink"></i></span><span class="task"><i class="dark"></i></span>
            <i class="dots right"></i>
        </div>

        <!-- Notificação -->
        <div class="balloon" role="status">
            <header><svg width="16" height="16" viewBox="0 0 16 16"><circle cx="8" cy="8" r="7.500" fill="#2a5bd0" stroke="#8ea6d8"/><path d="M8 3v2M8 7v6M6 7h2M6 13h4" stroke="#fff" stroke-width="1.800"/></svg><b>完成打印和发布作业</b><button aria-label="关闭">✕</button></header>
            <p>未发现错误或警告</p>
            <a href="#">单击以查看打印和发布详细信息...</a>
            <svg class="tail" width="20" height="20" viewBox="0 0 20 20"><path d="M1 0L18.500 18V0" fill="#ffffe1" stroke="#000"/></svg>
        </div>
        <div class="mark">https://blog.csdn.net/Davidletop</div>
    </div>
</body>
</html>
```

FILE: styles.css
```css
/* Reset */
* {
    margin: 0;
    padding: 0;
    box-sizing: border-box;
}

body {
    font: 12px/16px "Open Sans", "Noto Sans CJK SC", sans-serif;
    color: #f0f0f0;
    background: #383838;
    overflow: hidden;
}

button, input, select {
    font: inherit;
    color: inherit;
    background: none;
    border: none;
    border-radius: 0;
    outline: none;
}

select {
    appearance: none;
}

a {
    color: inherit;
    text-decoration: none;
}

h1, h2, h3 {
    font-size: 12px;
    font-weight: normal;
}

svg {
    display: block;
    flex: none;
}

.sprite { position: absolute; width: 0; height: 0; }
.i9 { width: 9px; height: 9px; }
.i12 { width: 12px; height: 12px; }
.i16 { width: 16px; height: 16px; }
.i18 { width: 18px; height: 18px; }
.i32 { width: 32px; height: 32px; }
.arr { width: 5px; height: 3px; }
.big-arr { width: 8px; height: 4px; }

.app {
    position: relative;
    height: 100vh;
    display: flex;
    flex-direction: column;
}

/* Barra de título */
.titlebar {
    display: flex;
    height: 46px;
    border-bottom: 2px solid #2c2c2c;
    background:
        repeating-linear-gradient(135deg, rgba(0, 0, 0, 0.05) 0 2px, transparent 2px 5px),
        linear-gradient(#a0a0a0, #838383 50%, #4e4e4e);
}

.logo {
    width: 41px;
    height: 41px;
    padding: 2px;
    border: 1px solid #1d1d1d;
    background: linear-gradient(#b5b5b5, #6a6a6a);
}

.title-rows {
    flex: 1;
}

.title-row {
    display: flex;
    align-items: center;
    height: 23px;
}

.title-row button {
    display: flex;
    align-items: center;
}

.qat {
    display: flex;
    gap: 8px;
    padding-left: 9px;
    width: 336px;
}

.qat button {
    gap: 7px;
}

.title-row h1 {
    flex: 1;
    padding-right: 118px;
    text-align: center;
    white-space: nowrap;
}

.play {
    border: 4px solid transparent;
    border-left: 5px solid #fff;
    margin-right: 1px;
}

.search {
    width: 180px;
    height: 21px;
    padding: 0 4px;
    border: 1px solid #444;
    background: #7c7c7c;
    font-style: italic;
}

.search::placeholder {
    color: #ddd;
}

.infocenter {
    display: flex;
    align-items: center;
    width: 269px;
    padding-left: 4px;
    gap: 8px;
}

.infocenter button {
    gap: 6px;
}

.infocenter .far {
    margin-left: 52px;
}

.infocenter .help {
    margin-left: 9px;
}

.winbtns {
    display: flex;
    gap: 5px;
    padding-right: 3px;
    margin-left: auto;
}

.menu {
    display: flex;
    gap: 1px;
}

.menu a {
    padding: 0 12px;
}

/* Abas da faixa */
.ribbon-tabs {
    display: flex;
    height: 20px;
    padding: 2px 4px 0;
    background: #535353;
    border-bottom: 1px solid #2c2c2c;
    color: #d0d0d0;
}

.ribbon-tabs a {
    padding: 0 10px;
    line-height: 17px;
}

.ribbon-tabs .active {
    padding: 0 8px;
    margin-right: 1px;
    border: 1px solid #333;
    border-bottom: none;
    background: linear-gradient(#777, #5e5e5e);
    color: #fff;
    line-height: 15px;
}

.minimize {
    display: flex;
    align-items: center;
    gap: 4px;
    margin-left: 12px;
}

/* Faixa de opções */
.ribbon {
    display: flex;
    height: 99px;
    padding-left: 2px;
    border-bottom: 2px solid #8a8a8a;
    background: linear-gradient(#5c5c5c, #474747);
}

.panel {
    display: flex;
    flex-direction: column;
    flex: none;
    border-right: 2px solid #444;
    border-bottom: 1px solid #333;
    background: #5c5c5c;
}

.w-draw { width: 210px; }
.w-modify { width: 193px; }
.w-note { width: 126px; }
.w-layer { width: 252px; }
.w-block { width: 80px; }
.w-prop { width: 201px; }
.w-group { width: 68px; }
.w-util { width: 76px; }
.w-view { width: 60px; }

.panel h2 {
    display: flex;
    align-items: center;
    justify-content: center;
    gap: 7px;
    height: 17px;
    background: #4b4b4b;
}

.panel .close {
    gap: 5px;
    padding-left: 4px;
}

.w-prop h2 {
    position: relative;
}

.launch {
    width: 8px;
    height: 8px;
}

.w-prop .launch {
    position: absolute;
    right: 3px;
}

.tools {
    display: flex;
    flex: 1;
    padding-top: 4px;
}

.tools button {
    white-space: nowrap;
}

.big {
    width: 41px;
    display: flex;
    flex-direction: column;
    align-items: center;
    padding-top: 3px;
    line-height: 21px;
}

.big.two {
    line-height: 16px;
}

.big.two svg {
    margin-bottom: 3px;
}

.big.wide {
    width: 46px;
    padding-left: 4px;
}

.big.wider { width: 49px; }
.big.full { width: 58px; }

.letter {
    height: 32px;
    font: 36px/30px "Open Sans", sans-serif;
    color: #e6e6e6;
}

.smalls {
    display: grid;
    grid-template-rows: repeat(3, 24px);
    grid-auto-flow: column;
    align-content: start;
}

.smalls.gap {
    margin-left: 3px;
}

.smalls.tight {
    margin-left: -3px;
}

.smalls.modify {
    grid-template-columns: 59px 60px 40px 26px;
    padding-left: 3px;
}

.smalls button,
.icon-grid button {
    display: flex;
    align-items: center;
    gap: 6px;
    padding: 0 4px;
    min-width: 24px;
    height: 24px;
}

.smalls.modify button {
    gap: 5px;
}

.smalls .on {
    height: 22px;
    margin-top: 1px;
    padding: 0 3px;
    border: 1px solid #2d4468;
    background: linear-gradient(#86a9dc, #55719c);
}

.icon-grid {
    display: grid;
    grid-template-columns: repeat(5, 24px);
}

.layer-select,
.psel {
    position: relative;
    display: flex;
    align-items: center;
    height: 22px;
    margin: 1px 0;
    border: 1px solid #333;
    background: linear-gradient(#737373, #545454);
}

.layer-select {
    width: 208px;
}

.layer-select select {
    width: 100%;
    padding-left: 80px;
}

.marks {
    position: absolute;
    left: 3px;
    display: flex;
    gap: 3px;
    pointer-events: none;
}

.marks .swatch {
    margin-left: 2px;
}

.swatch {
    width: 14px;
    height: 14px;
    background: #000;
}

.layer-select .arr,
.psel .arr {
    position: absolute;
    right: 2px;
    pointer-events: none;
}

.psel {
    width: 137px;
    margin-bottom: 2px;
    padding-left: 8px;
}

.psel.color {
    padding-left: 12px;
    gap: 8px;
}

.psel.color .swatch {
    width: 16px;
    height: 16px;
    border: 1px solid #bbb;
}

.psel select {
    flex: 1;
    padding-left: 1px;
}

.rule {
    width: 59px;
    border-top: 1px solid #fff;
}

/* Abas de arquivo */
.file-tabs {
    display: flex;
    align-items: flex-end;
    height: 29px;
    padding: 3px 0 0 12px;
    border-bottom: 4px solid #5e5e5e;
    background: #383838;
}

.file-tab {
    width: 134px;
    height: 22px;
    padding-left: 20px;
    line-height: 24px;
    color: #aaa;
    background: linear-gradient(#666, #505050);
    clip-path: polygon(0 100%, 6px 92%, 14px 15%, 19px 0, calc(100% - 14px) 0, calc(100% - 8px) 15%, 100% 92%, 100% 100%);
}

.file-tab.active {
    width: 130px;
    margin-left: -5px;
    padding: 0 14px;
    display: flex;
    justify-content: space-between;
    color: #fff;
    background: linear-gradient(#8a8a8a, #5e5e5e);
}

.file-tab .x {
    color: #444;
}

.add, .layouts button {
    width: 22px;
    height: 15px;
    border-radius: 4px 9px 4px 9px;
    background: #5a5a5a;
    color: #ccc;
    font-size: 16px;
    font-weight: bold;
    line-height: 14px;
}

.add {
    margin: 0 0 3px 4px;
}

/* Área de trabalho */
.work {
    flex: 1;
    display: flex;
    min-height: 0;
}

.palette {
    width: 152px;
    flex: none;
    display: flex;
    flex-direction: column;
    background: #5c5c5c;
}

.palette > h2 {
    height: 24px;
    margin-top: 1px;
    padding: 3px 0 0 15px;
    border-radius: 4px 4px 0 0;
    background: #535353;
    line-height: 18px;
}

.palette-top {
    display: flex;
    align-items: center;
    gap: 8px;
    padding: 9px 0 4px 17px;
}

.obj-select {
    position: relative;
    width: 50px;
    height: 23px;
    border: 1px solid #3c3c3c;
    background: linear-gradient(90deg, transparent 34px, #3c3c3c 34px 35px, transparent 35px), linear-gradient(#7a7a7a, #616161);
}

.obj-select select {
    width: 100%;
    height: 21px;
    padding-left: 3px;
}

.obj-select .arr {
    position: absolute;
    right: 4px;
    top: 10px;
    pointer-events: none;
}

.props {
    flex: 1;
    min-height: 0;
    margin: 0 13px 10px 3px;
    padding-left: 14px;
    overflow: hidden;
    background: linear-gradient(#444, #444) 0 0 / 5px 324px no-repeat;
}

.props h3 {
    display: flex;
    justify-content: space-between;
    align-items: center;
    height: 20px;
    padding: 0 7px;
    border: 1px solid #303030;
    background: #4a4a4a;
    font-weight: bold;
    color: #fff;
}

.props h3 i {
    width: 6px;
    height: 2px;
    background: #fff;
}

.props table {
    width: 105px;
    margin: -1px 0 3px 17px;
    border-collapse: collapse;
    table-layout: fixed;
}

.props tr {
    height: 19px;
}

.props th,
.props td {
    border: 1px solid #505050;
    font-weight: normal;
    text-align: left;
    white-space: nowrap;
    line-height: 16px;
}

.props tr:first-child th,
.props tr:first-child td {
    border-top-color: #303030;
}

.props th {
    width: 42px;
    padding-left: 6px;
    color: #fff;
}

.props td {
    padding-left: 2px;
}

.props .off {
    color: #aaa;
}

.sq {
    display: inline-block;
    width: 10px;
    height: 10px;
    margin-right: 6px;
    border-radius: 2px;
    background: #000;
    vertical-align: -1px;
}

.dash {
    display: inline-block;
    width: 22px;
    margin: 0 5px 0 2px;
    border-top: 1px solid #fff;
    vertical-align: 4px;
}

.stage {
    flex: 1;
    display: flex;
    flex-direction: column;
    min-width: 0;
}

.canvas {
    position: relative;
    flex: 1;
    overflow: hidden;
    background: #fff;
    color: #000;
}

.drawing {
    width: 100%;
    height: 100%;
    fill: #000;
}

.drawing text {
    font: 13px "Noto Sans CJK SC", sans-serif;
}

.drawing .vp { font-size: 12px; }
.drawing .mono { font: 14px "DejaVu Sans Mono", monospace; }
.drawing .ucs { font: 300 18px "Open Sans", sans-serif; text-anchor: middle; }
.thin, .slim { fill: none; stroke: #000; stroke-width: 1; }
.bold { fill: none; stroke: #000; stroke-width: 1.3; }
.dot { stroke-dasharray: 1 1; }

/* ViewCube */
.viewcube {
    position: absolute;
    top: 10px;
    right: 12px;
    width: 88px;
    display: grid;
    grid-template-columns: 1fr 34px 1fr;
    grid-template-rows: 18px 54px 18px 30px;
    align-items: center;
    justify-items: center;
    color: #aaa;
    background: radial-gradient(circle at 44px 45px, transparent 32px, #f8f8f8 32px 39px, transparent 39px);
}

.viewcube .n { grid-area: 1 / 2; }
.viewcube .w { grid-area: 2 / 1; justify-self: start; }
.viewcube .face { grid-area: 2 / 2; }
.viewcube .e { grid-area: 2 / 3; justify-self: end; }
.viewcube .s { grid-area: 3 / 2; }

.face {
    width: 34px;
    height: 34px;
    padding: 5px;
    border: 1px solid #999;
    background: #eee;
}

.face i {
    display: block;
    height: 22px;
    background: linear-gradient(#999, #999) 9px 3px / 2px 13px no-repeat, linear-gradient(#999, #999) 15px 8px / 3px 1px no-repeat, linear-gradient(#999, #999) 17px 15px / 3px 1px no-repeat, #e0e2e8;
}

.wcs {
    grid-area: 4 / 1 / 5 / 4;
    display: flex;
    align-items: center;
    gap: 4px;
    height: 16px;
    margin-top: 12px;
    padding: 0 4px;
    border-radius: 3px;
    background: #ebebf5;
    font: bold 11px "Liberation Sans", sans-serif;
    color: #aaa;
}

.navbar {
    position: absolute;
    top: 153px;
    right: 1px;
    width: 37px;
    height: 216px;
    border: 2px solid #c0c0c0;
    border-radius: 5px;
    background: #f6f6f6;
}

.thumb {
    position: absolute;
    top: 319px;
    right: 2px;
    width: 8px;
    height: 57px;
    border-radius: 4px;
    background: #555;
}

/* Linha de comando */
.command {
    display: flex;
    height: 38px;
    border: 1px solid #777;
    border-width: 3px 2px 1px 0;
    border-top-color: #606060;
    background: #fff;
    color: #000;
}

.cmd-left {
    display: flex;
    align-items: center;
    width: 54px;
    padding-left: 5px;
    gap: 6px;
    background: linear-gradient(#858585, #444);
    color: #fff;
    font-weight: bold;
}

.grip {
    width: 5px;
    height: 17px;
    background: repeating-linear-gradient(#aaa 0 1px, transparent 1px 3px);
}

.command label {
    display: flex;
    align-items: center;
    padding: 0 0 1px 5px;
    gap: 3px;
    font: 13px/16px "DejaVu Sans Mono", "Noto Sans CJK SC", monospace;
}

.command label .arr {
    color: #777;
}

.command b {
    margin: 0 1px 0 4px;
    font-size: 12px;
}

.command input {
    flex: 1;
}

/* Barra de status */
.status {
    display: flex;
    justify-content: space-between;
    height: 29px;
    border-top: 1px solid #888;
    border-bottom: 1px solid #555;
    background: #383838;
}

.layouts {
    display: flex;
    padding-left: 12px;
    gap: 3px;
}

.layouts a {
    width: 62px;
    height: 18px;
    text-align: center;
    line-height: 18px;
    color: #aaa;
    border-radius: 0 0 8px 8px;
    background: #505050;
}

.layouts a.active {
    width: 46px;
    background: linear-gradient(#5c5c5c, #8a8a8a);
    color: #fff;
    font-weight: bold;
}

.cells {
    display: flex;
    height: 27px;
    background: #4f4f4f;
    border: 1px solid #777;
    border-right: none;
}

.cell {
    display: flex;
    align-items: center;
    border-right: 1px solid #777;
    white-space: nowrap;
}

.cell svg {
    width: 16px;
    height: 16px;
    margin: 0 4px;
}

.cell .arr {
    width: 8px;
    height: 4px;
}

.cell .lit {
    filter: drop-shadow(0 0 2px #003c80);
}

.coords {
    width: 154px;
    justify-content: flex-end;
    padding-right: 8px;
    color: #fff;
}

.model {
    padding: 0 2px;
    font-weight: bold;
}

.ratio {
    padding-left: 5px;
}

.cell.pad {
    padding: 0 1px;
}

.cell.last {
    border-right: none;
}

/* Barra de tarefas */
.taskbar {
    display: flex;
    gap: 4px;
    height: 8px;
    overflow: hidden;
    border-top: 1px solid #dfe9f4;
    background: linear-gradient(90deg, #7f93ac, #a4c0de 18%, #a4c0de 66%, #7d8fa7 68%, #7d8fa7);
}

.start {
    width: 28px;
    height: 28px;
    margin-left: 12px;
    border-radius: 50%;
    border: 1px solid #1d4468;
    background: #bcd2e6;
}

.dots {
    width: 8px;
    height: 2px;
    margin: 4px 0 0 14px;
    background: repeating-linear-gradient(90deg, #333 0 2px, transparent 2px 3px);
}

.dots.right {
    margin-left: 563px;
}

.pin {
    width: 32px;
    height: 20px;
    margin: 1px 14px 0 18px;
    border-radius: 10px;
    background: #1a84ff;
}

.task {
    width: 58px;
    height: 12px;
    padding: 2px 20px;
    border: 1px solid #4c6480;
    border-radius: 2px;
    background: #c9d8e8;
}

.task.white { background: #fff; }
.task i { display: block; height: 18px; }
.task .red { border-radius: 50%; background: #e2503c; }
.task .blue { border-radius: 8px; background: #2472e0; }
.task .pink { background: #fbe5dc; }
.task .dark { background: #333; }

/* Notificação */
.balloon {
    position: absolute;
    right: 34px;
    bottom: 42px;
    width: 206px;
    height: 81px;
    padding: 9px 8px 0 15px;
    border: 1px solid #000;
    border-radius: 14px;
    background: #ffffe1;
    color: #000;
    white-space: nowrap;
}

.balloon header {
    display: flex;
    align-items: center;
    margin-left: -6px;
}

.balloon b {
    flex: 1;
    padding-left: 11px;
}

.balloon button {
    width: 16px;
    height: 16px;
    border: 1px solid #aaa;
    background: #eee;
    font-weight: bold;
    line-height: 14px;
}

.balloon p {
    margin: 5px 0;
}

.balloon a {
    color: #00f;
    text-decoration: underline;
}

.tail {
    position: absolute;
    left: 138px;
    top: 78px;
}

.mark {
    position: absolute;
    right: 9px;
    bottom: 10px;
    font: 16px/18px "Liberation Sans", sans-serif;
    color: rgba(255, 255, 255, 0.6);
}
```
